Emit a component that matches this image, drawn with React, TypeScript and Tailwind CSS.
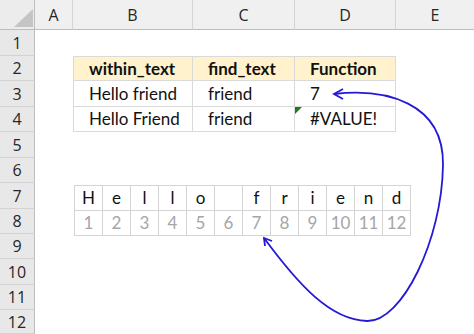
import React from 'react';

const cols = ['A', 'B', 'C', 'D', 'E'];
const rowHeights = [26, 25, 26, 25, 26, 25, 26, 25, 25, 26, 25, 24];
const letters = ['H', 'e', 'l', 'l', 'o', '', 'f', 'r', 'i', 'e', 'n', 'd'];

const tableRows = [
    { a: 'within_text', b: 'find_text', c: 'Function', head: true },
    { a: 'Hello friend', b: 'friend', c: '7' },
    { a: 'Hello Friend', b: 'friend', c: '#VALUE!', flag: true },
];

const App = () => {
    return (
        <div className="relative w-[474px] h-[334px] overflow-hidden bg-white">
            <div
                className="grid"
                style={{
                    gridTemplateColumns: '35px 38px 120px 102px 101px 78px',
                    gridTemplateRows: `30px ${rowHeights.map(h => h + 'px').join(' ')}`,
                }}
            >
                {/* corner */}
                <div className="relative bg-[#ececec] border-r border-b border-[#bdbdbd]">
                    <svg className="absolute left-[14px] top-[9px]" width="19" height="18" viewBox="0 0 19 18">
                        <polygon points="19,0 19,18 0,18" fill="#c4c4c4" />
                    </svg>
                </div>

                {/* column headers */}
                {cols.map((c, i) => (
                    <div
                        key={c}
                        className={`flex items-center justify-center bg-[#f0f0f0] border-b border-[#bdbdbd] text-[16px] text-[#262626] font-['Open_Sans',sans-serif] ${i < cols.length - 1 ? 'border-r border-r-[#d4d4d4]' : ''}`}
                    >
                        {c}
                    </div>
                ))}

                {/* row headers */}
                {rowHeights.map((_, r) => (
                    <div
                        key={r}
                        className="flex items-center justify-center bg-[#e8e8e8] border-r border-[#bdbdbd] border-b border-b-[#d2d2d2] text-[16px] text-[#262626] font-['Open_Sans',sans-serif]"
                        style={{ gridRow: r + 2, gridColumn: 1 }}
                    >
                        {r + 1}
                    </div>
                ))}

                {/* data table B2:D4 */}
                {tableRows.map((row, i) => (
                    <React.Fragment key={i}>
                        {[row.a, row.b, row.c].map((v, j) => (
                            <div
                                key={j}
                                className={`relative flex items-center pl-[15px] border-[#dadada] border-b border-r text-[17px] text-[#111] font-['Lato',sans-serif] ${j === 0 ? 'border-l' : ''} ${i === 0 ? 'border-t bg-[#fff2cc] font-bold' : 'bg-white'}`}
                                style={{ gridRow: i + 3, gridColumn: j + 3 }}
                            >
                                {row.flag && j === 2 && (
                                    <svg className="absolute left-0 top-0" width="7" height="7" viewBox="0 0 7 7">
                                        <polygon points="0,0 7,0 0,7" fill="#1e7a1e" />
                                    </svg>
                                )}
                                {v}
                            </div>
                        ))}
                    </React.Fragment>
                ))}

                {/* character index table, rows 7-8 */}
                <div
                    className="mt-[2px] ml-px grid border-t border-l border-[#d4d4d4] self-start justify-self-start"
                    style={{ gridRow: '8 / span 2', gridColumn: '3 / span 4', gridTemplateColumns: 'repeat(12, 28px)' }}
                >
                    {letters.map((l, i) => (
                        <div key={'l' + i} className="h-[25px] flex items-center justify-center border-r border-b border-[#d4d4d4] text-[17px] text-[#111] font-['Lato',sans-serif]">
                            {l}
                        </div>
                    ))}
                    {letters.map((_, i) => (
                        <div key={'n' + i} className="h-[25px] flex items-center justify-center border-r border-b border-[#d4d4d4] text-[17px] text-[#a6a6a6] font-['Lato',sans-serif]">
                            {i + 1}
                        </div>
                    ))}
                </div>
            </div>

            {/* connector arrow */}
            <svg className="absolute inset-0 pointer-events-none" width="474" height="334" viewBox="0 0 474 334">
                <path
                    d="M334 94 C 385 88, 444 102, 443 165 C 442 240, 402 322, 367 321 C 330 320, 298 284, 264 238"
                    fill="none"
                    stroke="#2419d4"
                    strokeWidth="1.8"
                />
                <path d="M343 89 L 334 94 L 343 99" fill="none" stroke="#2419d4" strokeWidth="1.8" />
                <path d="M272 241 L 264 238 L 265 246" fill="none" stroke="#2419d4" strokeWidth="1.8" />
            </svg>
        </div>
    );
};

export default App;
